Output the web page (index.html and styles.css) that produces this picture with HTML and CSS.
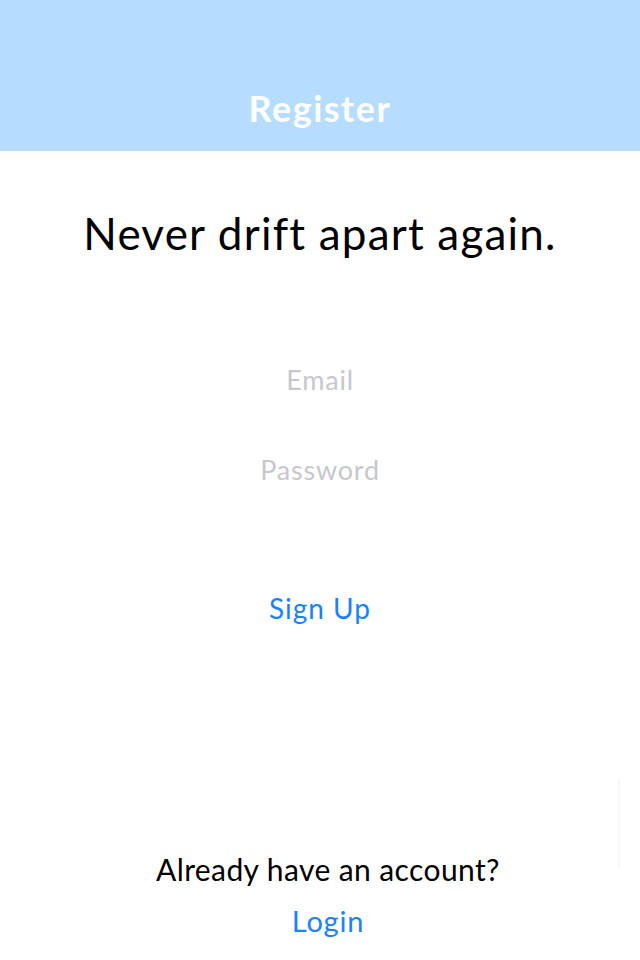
FILE: index.html
```html
<!DOCTYPE html>
<html>
<head>
<meta charset="utf-8">
<link rel="stylesheet" href="styles.css">
</head>
<body>
<div class="screen">
  <header class="nav"><h1 class="nav-title">Register</h1></header>
  <main class="content">
    <h2 class="tagline">Never drift apart again.</h2>
    <form class="form">
      <input class="field" type="email" placeholder="Email">
      <input class="field" type="password" placeholder="Password">
      <button class="link-btn signup" type="button">Sign Up</button>
    </form>
    <div class="footer">
      <p class="footer-text">Already have an account?</p>
      <button class="link-btn login" type="button">Login</button>
    </div>
  </main>
  <div class="scroll-indicator"></div>
</div>
</body>
</html>
```
FILE: styles.css
```css
* { box-sizing: border-box; }
html, body { margin: 0; padding: 0; }
body {
  font-family: "Lato", "Noto Sans", sans-serif;
  background: #fff;
  color: #000;
}
.screen {
  position: relative;
  width: 640px;
  height: 960px;
  display: flex;
  flex-direction: column;
  overflow: hidden;
}
.nav {
  height: 151px;
  background: #b6dcff;
  display: flex;
  align-items: flex-end;
  justify-content: center;
  padding-bottom: 23px;
}
.nav-title {
  margin: 0;
  color: #fff;
  font-size: 36px;
  font-weight: 700;
  line-height: 40px;
  letter-spacing: 1.5px;
}
.content {
  flex: 1;
  display: flex;
  flex-direction: column;
  align-items: center;
}
.tagline {
  margin: 54px 0 0;
  font-weight: 400;
  font-size: 44px;
  line-height: 56px;
  letter-spacing: 1.2px;
}
.form {
  display: flex;
  flex-direction: column;
  align-items: center;
  margin-top: 98px;
}
.field {
  border: none;
  outline: none;
  background: transparent;
  text-align: center;
  font-family: inherit;
  font-size: 27px;
  letter-spacing: 0.8px;
  width: 300px;
  height: 40px;
  padding: 0;
  color: #000;
}
.field::placeholder { color: #c7c7cd; }
.field + .field { margin-top: 50px; }
.link-btn {
  border: none;
  background: transparent;
  font-family: inherit;
  color: #1a82fb;
  padding: 0;
  cursor: pointer;
}
.signup {
  margin-top: 99px;
  font-size: 28px;
  line-height: 40px;
  letter-spacing: 1px;
}
.footer {
  margin-top: auto;
  margin-bottom: 19px;
  margin-left: 16px;
  display: flex;
  flex-direction: column;
  align-items: center;
}
.footer-text {
  margin: 0;
  font-size: 30px;
  line-height: 40px;
  letter-spacing: 0.4px;
}
.login {
  margin-top: 12px;
  font-size: 29px;
  line-height: 40px;
  letter-spacing: 0.8px;
}
.scroll-indicator {
  position: absolute;
  right: 20px;
  top: 778px;
  width: 2px;
  height: 90px;
  background: #f7f7f7;
  border-radius: 1px;
}
```
